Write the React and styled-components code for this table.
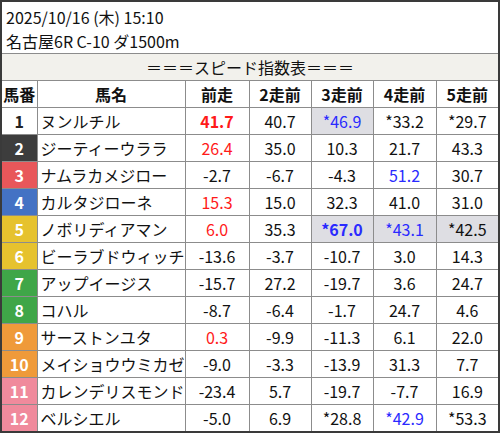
import styled, { createGlobalStyle } from "styled-components";

const GlobalStyle = createGlobalStyle`
  body {
    margin: 0;
    background: #ffffff;
    font-family: "Noto Sans CJK JP", "Noto Sans", sans-serif;
  }
`;

const WAKU = {
  1: { bg: "#ffffff", fg: "#222222" },
  2: { bg: "#3d3d3d", fg: "#ffffff" },
  3: { bg: "#e8575a", fg: "#ffffff" },
  4: { bg: "#4472c4", fg: "#ffffff" },
  5: { bg: "#e6c22e", fg: "#ffffff" },
  6: { bg: "#3fa648", fg: "#ffffff" },
  7: { bg: "#ef9a3a", fg: "#ffffff" },
  8: { bg: "#f08a9c", fg: "#ffffff" },
};

// each value: [text, color, bold, shaded]
const rows = [
  { no: 1, waku: 1, name: "ヌンルチル", v: [["41.7", "r", 1], ["40.7"], ["*46.9", "b", 0, 1], ["*33.2"], ["*29.7"]] },
  { no: 2, waku: 2, name: "ジーティーウララ", v: [["26.4", "r"], ["35.0"], ["10.3"], ["21.7"], ["43.3"]] },
  { no: 3, waku: 3, name: "ナムラカメジロー", v: [["-2.7"], ["-6.7"], ["-4.3"], ["51.2", "b"], ["30.7"]] },
  { no: 4, waku: 4, name: "カルタジローネ", v: [["15.3", "r"], ["15.0"], ["32.3"], ["41.0"], ["31.0"]] },
  { no: 5, waku: 5, name: "ノボリディアマン", v: [["6.0", "r"], ["35.3"], ["*67.0", "b", 1, 1], ["*43.1", "b", 0, 1], ["*42.5", "", 0, 1]] },
  { no: 6, waku: 5, name: "ビーラブドウィッチ", v: [["-13.6"], ["-3.7"], ["-10.7"], ["3.0"], ["14.3"]] },
  { no: 7, waku: 6, name: "アップイージス", v: [["-15.7"], ["27.2"], ["-19.7"], ["3.6"], ["24.7"]] },
  { no: 8, waku: 6, name: "コハル", v: [["-8.7"], ["-6.4"], ["-1.7"], ["24.7"], ["4.6"]] },
  { no: 9, waku: 7, name: "サーストンユタ", v: [["0.3", "r"], ["-9.9"], ["-11.3"], ["6.1"], ["22.0"]] },
  { no: 10, waku: 7, name: "メイショウウミカゼ", v: [["-9.0"], ["-3.3"], ["-13.9"], ["31.3"], ["7.7"]] },
  { no: 11, waku: 8, name: "カレンデリスモンド", v: [["-23.4"], ["5.7"], ["-19.7"], ["-7.7"], ["16.9"]] },
  { no: 12, waku: 8, name: "ベルシエル", v: [["-5.0"], ["6.9"], ["*28.8"], ["*42.9", "b"], ["*53.3"]] },
];

const COLORS = { r: "#ff1a1a", b: "#2a2aff", "": "#111111" };
const COL_WIDTHS = [35, 148, 64, 62, 62, 63, 62];
const heads = ["前走", "2走前", "3走前", "4走前", "5走前"];

const Frame = styled.div`
  width: 496px;
  border: 2px solid #3a3a3a;
  background: #ffffff;
  color: #111111;
`;

const Info = styled.div`
  height: 51px;
  padding: 3px 0 0 4px;
  box-sizing: border-box;
  font-size: 16px;
  line-height: 24px;
`;

const Table = styled.table`
  width: 100%;
  border-collapse: collapse;
  table-layout: fixed;
  font-size: 16px;
`;

const Col = styled.col`
  width: ${(p) => p.$w}px;
`;

const Caption = styled.td`
  height: 26px;
  padding: 0;
  background: #f2f1ec;
  border-top: 1px solid #8c8c8c;
  text-align: center;
  line-height: 26px;
`;

const Th = styled.th`
  height: 26px;
  padding: 0;
  border: 1px solid #8c8c8c;
  font-weight: 700;
  text-align: center;
  &:first-child { border-left: none; }
  &:last-child { border-right: none; }
`;

const Td = styled.td`
  height: 26px;
  padding: 0;
  border: 1px solid #8c8c8c;
  text-align: center;
  white-space: nowrap;
  overflow: hidden;
  &:first-child { border-left: none; }
  &:last-child { border-right: none; }
  tr:last-child & { border-bottom: none; }
`;

const WakuCell = styled(Td)`
  background: ${(p) => WAKU[p.$waku].bg};
  color: ${(p) => WAKU[p.$waku].fg};
  font-weight: 700;
`;

const NameCell = styled(Td)`
  text-align: left;
  padding-left: 3px;
`;

const ValueCell = styled(Td)`
  color: ${(p) => COLORS[p.$color || ""]};
  font-weight: ${(p) => (p.$bold ? 700 : 400)};
  background: ${(p) => (p.$shaded ? "#dedee3" : "transparent")};
`;

export default function App() {
  return (
    <>
      <GlobalStyle />
      <Frame>
        <Info>
          <div>2025/10/16 (木) 15:10</div>
          <div>名古屋6R C-10 ダ1500m</div>
        </Info>
        <Table>
          <colgroup>
            {COL_WIDTHS.map((w, i) => (
              <Col key={i} $w={w} />
            ))}
          </colgroup>
          <tbody>
            <tr>
              <Caption colSpan={7}>＝＝＝スピード指数表＝＝＝</Caption>
            </tr>
            <tr>
              <Th>馬番</Th>
              <Th>馬名</Th>
              {heads.map((h) => (
                <Th key={h}>{h}</Th>
              ))}
            </tr>
            {rows.map((r) => (
              <tr key={r.no}>
                <WakuCell $waku={r.waku}>{r.no}</WakuCell>
                <NameCell>{r.name}</NameCell>
                {r.v.map(([t, c, b, s], i) => (
                  <ValueCell key={i} $color={c} $bold={b} $shaded={s}>
                    {t}
                  </ValueCell>
                ))}
              </tr>
            ))}
          </tbody>
        </Table>
      </Frame>
    </>
  );
}
